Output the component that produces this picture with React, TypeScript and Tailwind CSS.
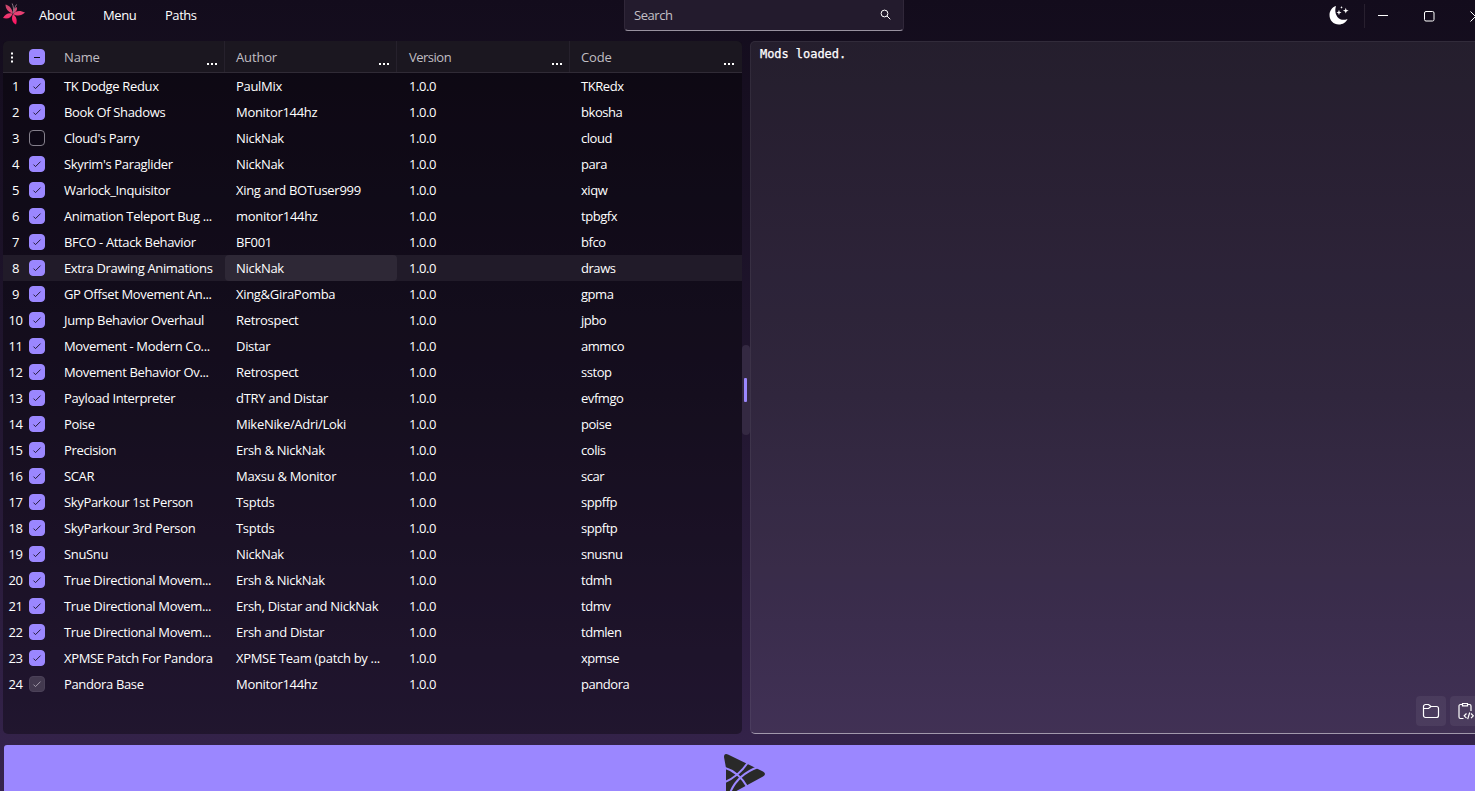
import React from 'react';

type Mod = [name: string, author: string, code: string];

const mods: Mod[] = [
  ['TK Dodge Redux', 'PaulMix', 'TKRedx'],
  ['Book Of Shadows', 'Monitor144hz', 'bkosha'],
  ["Cloud's Parry", 'NickNak', 'cloud'],
  ["Skyrim's Paraglider", 'NickNak', 'para'],
  ['Warlock_Inquisitor', 'Xing and BOTuser999', 'xiqw'],
  ['Animation Teleport Bug ...', 'monitor144hz', 'tpbgfx'],
  ['BFCO - Attack Behavior', 'BF001', 'bfco'],
  ['Extra Drawing Animations', 'NickNak', 'draws'],
  ['GP Offset Movement An...', 'Xing&GiraPomba', 'gpma'],
  ['Jump Behavior Overhaul', 'Retrospect', 'jpbo'],
  ['Movement - Modern Co...', 'Distar', 'ammco'],
  ['Movement Behavior Ov...', 'Retrospect', 'sstop'],
  ['Payload Interpreter', 'dTRY and Distar', 'evfmgo'],
  ['Poise', 'MikeNike/Adri/Loki', 'poise'],
  ['Precision', 'Ersh & NickNak', 'colis'],
  ['SCAR', 'Maxsu & Monitor', 'scar'],
  ['SkyParkour 1st Person', 'Tsptds', 'sppffp'],
  ['SkyParkour 3rd Person', 'Tsptds', 'sppftp'],
  ['SnuSnu', 'NickNak', 'snusnu'],
  ['True Directional Movem...', 'Ersh & NickNak', 'tdmh'],
  ['True Directional Movem...', 'Ersh, Distar and NickNak', 'tdmv'],
  ['True Directional Movem...', 'Ersh and Distar', 'tdmlen'],
  ['XPMSE Patch For Pandora', 'XPMSE Team (patch by ...', 'xpmse'],
  ['Pandora Base', 'Monitor144hz', 'pandora'],
];

const columns = 'grid grid-cols-[49px_173px_172px_173px_172px]';

function Check({ state }: { state: 'on' | 'off' | 'disabled' | 'mixed' }) {
  const tone = {
    on: 'border-[#9b87ff] bg-[#9b87ff] text-[#191126]',
    mixed: 'border-[#9b87ff] bg-[#9b87ff] text-[#0a0710]',
    off: 'border-[#85808c] bg-[#0d0815]',
    disabled: 'border-[#4b4158] bg-[#43394f] text-[#aba5b3]',
  }[state];
  return (
    <span className={`box-border flex size-4 items-center justify-center rounded-[4px] border ${tone}`}>
      <svg className="size-3.5 shrink-0" viewBox="0 0 14 14" fill="none" stroke="currentColor">
        {state === 'mixed' && <path d="M4 7.5h6" strokeWidth="1" />}
        {(state === 'on' || state === 'disabled') && <path d="M3.5 7.6l2 2 5-5" strokeWidth="0.9" />}
      </svg>
    </span>
  );
}

function Flower() {
  return (
    <svg className="size-6" viewBox="0 0 24 24">
      <defs>
        <linearGradient id="petal" gradientUnits="userSpaceOnUse" x1="0" y1="2" x2="0" y2="22">
          <stop offset="0" stopColor="#c2486a" />
          <stop offset="0.5" stopColor="#ec3f74" />
          <stop offset="1" stopColor="#ff1060" />
        </linearGradient>
      </defs>
      <g fill="url(#petal)">
        <path d="M10.500 11.500C6 10 3.500 6.500 3.500 2.500c4 1 7 4.500 7 9z" />
        <path d="M10.500 11.500c-1 4-4.500 6-9.500 4.500 2-4 5.500-5.500 9.500-4.500z" />
        <path d="M11 12c3.500 2.500 4.500 6.500 3 10.500-4-2-5-6-3-10.500z" />
        <path d="M11 12c3-3.500 7-4 12-1.500-3.500 3.500-8 4-12 1.500z" />
        <path d="M10.500 11.500c0-3 1.500-5 4.500-6.500.5 3-1 5.500-4.500 6.500z" />
      </g>
      <path d="M11 11.500c1-4 .5-7-.8-10M11.500 11c.8-4 1.500-6 3-8.500" stroke="#8f7483" strokeWidth="1" fill="none" />
    </svg>
  );
}

function TitleBar() {
  return (
    <header className="flex h-[41px] shrink-0 items-start">
      <div className="mt-0.5 ml-0.5 w-6"><Flower /></div>
      <nav className="flex h-[30px] w-[598px] items-center pl-[13px]">
        <span className="w-16 tracking-[-0.2px]">About</span>
        <span className="w-[62px] tracking-[-0.4px]">Menu</span>
        <span className="tracking-[-0.45px]">Paths</span>
      </nav>
      <div className="flex h-[31px] w-[280px] items-center justify-between rounded-b-[4px] border border-t-0 border-[#302739] border-b-[#98919f] bg-[#231b2d] pr-3 pb-px pl-[9px]">
        <span className="tracking-[-0.45px] text-[#c3c0c7]">Search</span>
        <svg className="size-[11px]" viewBox="0 0 11 11" fill="none" stroke="white">
          <circle cx="4.500" cy="4.500" r="3.400" />
          <path d="M7 7l3.300 3.300" />
        </svg>
      </div>
      <div className="mt-[3px] ml-auto flex h-6 shrink-0 items-center">
        <svg className="mr-[15px] size-5" viewBox="0 0 20 20" fill="white">
          <path d="M7 1C3 2.300.5 5.800.5 10c0 5.500 4 9.500 9.300 9.500 4 0 7.300-2.200 8.700-5.500-2.500 1-5 1.200-7.200.2C6.800 12 5.300 6 7 1z" />
          <path d="M10 4.800l.6 2 1.900.7-1.900.7-.6 2-.7-2-1.800-.7 1.800-.7zM16.800 2.700l.7 2.200 2.200.7-2.200.8-.7 2.100-.8-2.100-2.100-.8 2.100-.7zM12.500 1l.4 1 .9.300-.9.400-.4 1-.4-1-.9-.4.9-.3z" />
        </svg>
        <div className="mt-0.5 h-6 w-px bg-[#28202f]" />
        <svg className="mt-0.5 mr-[35px] ml-[13px] h-3 w-2.5" viewBox="0 0 10 12" stroke="white"><path d="M0 5.500h10" /></svg>
        <svg className="mt-0.5 mr-[35px] ml-px size-[11px]" viewBox="0 0 11 11" fill="none" stroke="white">
          <rect x=".5" y=".5" width="9.500" height="9.500" rx="1.500" />
        </svg>
        <div className="mt-0.5 w-[5px] overflow-hidden">
          <svg className="size-[11px]" viewBox="0 0 11 11" stroke="white"><path d="M.5.5l10 10M10.500.5l-10 10" /></svg>
        </div>
      </div>
    </header>
  );
}

function ModTable() {
  return (
    <section className="flex h-[693px] w-[739px] shrink-0 flex-col overflow-hidden rounded-[5px] bg-black/35">
      <div className={`${columns} h-8 shrink-0 border-b border-[#302b36] bg-[#1b1720]`}>
        <div className="flex items-center pl-[7px]">
          <svg className="mr-[14px] h-3 w-[5px]" viewBox="0 0 5 12" fill="white">
            <path d="M1 1.500h2v2H1zM1 5.500h2v2H1zM1 9.500h2v2H1z" />
          </svg>
          <Check state="mixed" />
        </div>
        {['Name', 'Author', 'Version', 'Code'].map((label) => (
          <div key={label} className="flex items-center justify-between border-r border-[#26212c] pr-[7px] pl-3 tracking-[-0.15px] text-[#c0bec3] last:border-r-0 last:pr-2 last:pl-[11px] nth-3:pl-[11px] nth-4:tracking-[-0.5px]">
            <span>{label}</span>
            <svg className="mt-[14px] h-[2px] w-[10px]" viewBox="0 0 10 2" fill="white">
              <path d="M0 0h2v2H0zM4 0h2v2H4zM8 0h2v2H8z" />
            </svg>
          </div>
        ))}
      </div>
      <div className="flex flex-col">
        {mods.map(([name, author, code], i) => (
          <div key={i} className={`${columns} h-[26px] ${i === 7 ? 'bg-[#211b29]' : ''}`}>
            <div className="flex items-center">
              <span className="mr-1 ml-[3px] w-[19px] text-center tracking-[-0.5px]">{i + 1}</span>
              <Check state={i === 2 ? 'off' : i === 23 ? 'disabled' : 'on'} />
            </div>
            <span className="flex items-center pl-3 tracking-[-0.35px] whitespace-pre">{name}</span>
            <span className={`flex items-center rounded-[4px] pl-[11px] whitespace-pre ${i === 7 ? 'bg-[#2e2836]' : ''}`}>{author}</span>
            <span className="flex items-center pl-3 tracking-[-0.45px]">1.0.0</span>
            <span className="flex items-center pl-[11px] tracking-[-0.45px]">{code}</span>
          </div>
        ))}
      </div>
    </section>
  );
}

function LogPanel() {
  return (
    <section className="flex h-[693px] min-w-0 grow flex-col justify-between overflow-hidden rounded-l-[5px] border border-r-0 border-white/6 border-b-[#a198ac] bg-white/7">
      <p className="pt-[3px] pl-[9px] font-['DejaVu_Sans_Mono','Liberation_Mono',monospace] text-[12px] leading-[18px] tracking-[-0.05px] [-webkit-text-stroke:0.25px_white]">Mods loaded.</p>
      <div className="mb-[7px] ml-auto flex w-[59px] gap-1 overflow-hidden">
        <button className="flex size-[30px] shrink-0 items-center justify-center rounded-[4px] bg-white/6">
          <svg className="size-[18px]" viewBox="0 0 18 18" fill="none" stroke="white" strokeWidth="1.200">
            <path d="M1.500 4.500a2 2 0 012-2h3L9 4.500h5.500a2 2 0 012 2v7a2 2 0 01-2 2h-11a2 2 0 01-2-2zM1.500 6.500h5L9 4.500" />
          </svg>
        </button>
        <button className="flex size-[30px] shrink-0 items-center justify-center rounded-[4px] bg-white/6">
          <svg className="size-[18px]" viewBox="0 0 18 18" fill="none" stroke="white" strokeWidth="1.200">
            <path d="M7.500 16.500h-3a1.500 1.500 0 01-1.500-1.500V4a1.500 1.500 0 011.500-1.500H6.500m5 0H13.500A1.500 1.500 0 0115 4v5M6.500 1.500h5v2.300h-5zM10.500 11.500l-2.300 2.300 2.300 2.300m4.500-4.600l2.300 2.300-2.300 2.300m-1.300-5.600l-2 6.600" />
          </svg>
        </button>
      </div>
    </section>
  );
}

export default function App() {
  return (
    <div className="flex h-[791px] w-[1475px] flex-col overflow-hidden bg-linear-to-b from-[#130c1c] via-[#21162f] to-[#36244d] font-['Open_Sans','Noto_Sans',sans-serif] text-[13px] leading-[18px] tracking-[-0.3px] text-white">
      <TitleBar />
      <main className="flex shrink-0 pl-[3px]">
        <ModTable />
        <div className="flex w-2 shrink-0 items-center">
          <div className="mt-1 flex h-[90px] w-2 items-center justify-start rounded-full bg-[#342942] pl-0.5">
            <div className="h-6 w-[3px] rounded-[1px] bg-[#9b87ff]" />
          </div>
        </div>
        <LogPanel />
      </main>
      <button className="mt-[11px] ml-1 flex h-[46px] shrink-0 items-start rounded-tl-[3px] bg-[#9b87ff] pt-[9px] pl-[720px]">
        <svg className="h-[40px] w-[41px]" viewBox="0 0 41 40">
          <path d="M0 3Q0-1 4 .5L39 17.500q4 2.500 0 5L5 41H2V14z" fill="#292929" />
          <path d="M0 13.500Q15 18 24 34M0 28.500Q14 23 24 8.500M6 39Q13 21 34 13" stroke="#9b87ff" strokeWidth="2" fill="none" />
        </svg>
      </button>
    </div>
  );
}
